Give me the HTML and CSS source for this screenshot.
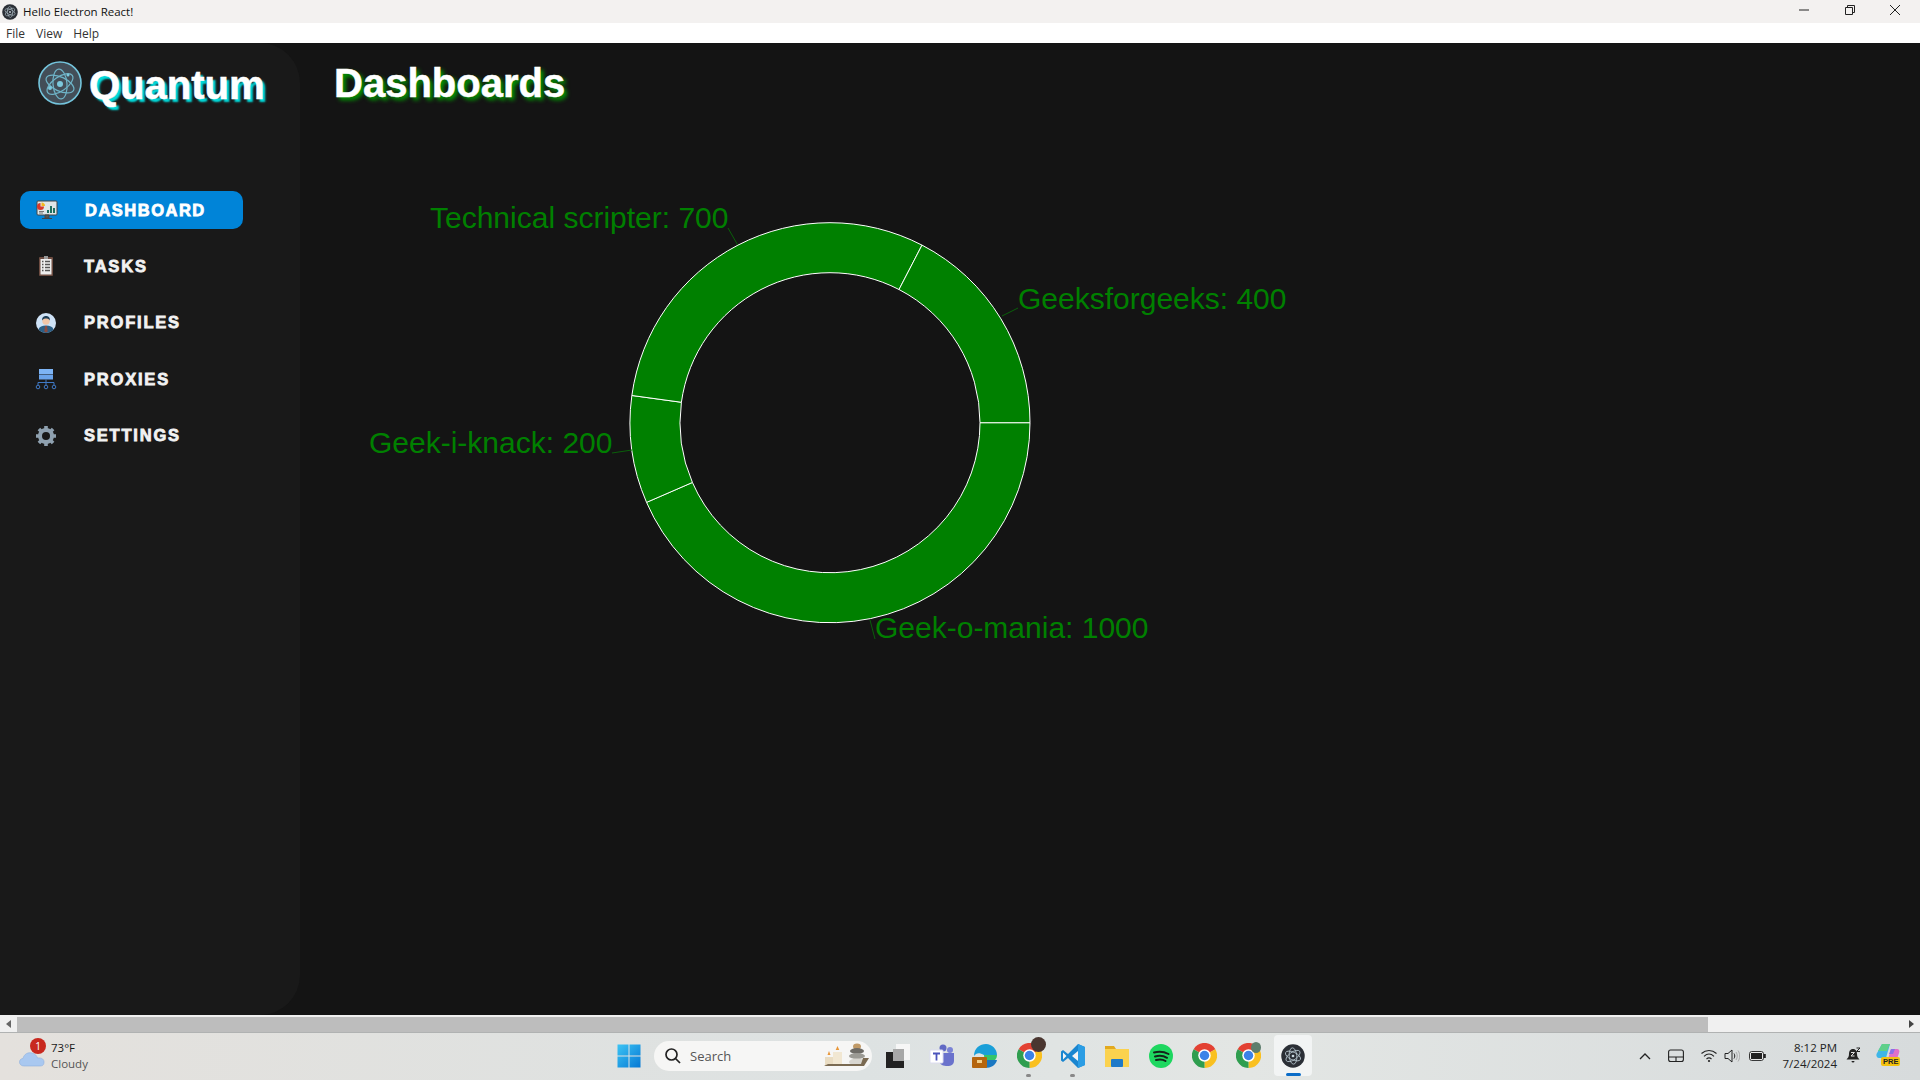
FILE: index.html
```html
<!DOCTYPE html>
<html lang="en">
<head>
    <meta charset="UTF-8">
    <title>Hello Electron React!</title>
    <link rel="stylesheet" href="styles.css">
</head>
<body>

    <svg class="defs" width="0" height="0">
        <symbol id="atom" viewBox="0 0 44 44">
            <circle cx="22" cy="22" r="21" fill="#434e58" stroke="#74c4dc" stroke-width="1.6"/>
            <g fill="none" stroke="#6fb4c8" stroke-width="1.2">
                <ellipse cx="22" cy="23" rx="15" ry="7" transform="rotate(25 22 23)"/>
                <ellipse cx="22" cy="23" rx="15" ry="7" transform="rotate(85 22 23)"/>
                <ellipse cx="22" cy="23" rx="15" ry="7" transform="rotate(145 22 23)"/>
            </g>
            <g fill="#7cc8dc">
                <circle cx="22" cy="23" r="3"/>
                <circle cx="12" cy="27" r="2"/>
                <circle cx="30" cy="14" r="1.5"/>
            </g>
        </symbol>
        <symbol id="atom-dark" viewBox="0 0 44 44">
            <circle cx="22" cy="22" r="21.500" fill="#2b2f36"/>
            <g fill="none" stroke="#b7c6cf" stroke-width="1.500">
                <ellipse cx="22" cy="22" rx="15" ry="7" transform="rotate(25 22 22)"/>
                <ellipse cx="22" cy="22" rx="15" ry="7" transform="rotate(85 22 22)"/>
                <ellipse cx="22" cy="22" rx="15" ry="7" transform="rotate(145 22 22)"/>
            </g>
            <circle cx="22" cy="22" r="2.500" fill="#c8d6de"/>
        </symbol>
        <symbol id="chrome" viewBox="2 2 20 20">
            <path d="M12 12 L3.300 7 A10 10 0 0 1 20.700 7 Z" fill="#e34133"/>
            <path d="M12 12 L20.700 7 A10 10 0 0 1 12 22 Z" fill="#f9c020"/>
            <path d="M12 12 L12 22 A10 10 0 0 1 3.300 7 Z" fill="#2f9e4f"/>
            <circle cx="12" cy="12" r="5" fill="#fff"/>
            <circle cx="12" cy="12" r="3.800" fill="#3b82e8"/>
        </symbol>
    </svg>

    <div class="title-bar">
        <svg class="title-icon" width="16" height="16"><use href="#atom-dark"/></svg>
        <span class="title-text">Hello Electron React!</span>
        <div class="window-buttons">
            <svg width="12" height="12" viewBox="0 0 12 12"><path d="M1 6h10" stroke="#222" fill="none"/></svg>
            <svg width="12" height="12" viewBox="0 0 12 12"><path d="M1.500 3.500h7v7h-7zM3.500 3V1.500h7v7H9" stroke="#222" fill="none"/></svg>
            <svg width="12" height="12" viewBox="0 0 12 12"><path d="M1 1l10 10M11 1L1 11" stroke="#222" fill="none"/></svg>
        </div>
    </div>

    <div class="menu-bar">
        <span>File</span>
        <span>View</span>
        <span>Help</span>
    </div>

    <div class="app">
        <div class="sidebar">
            <div class="logo">
                <svg width="44" height="44"><use href="#atom"/></svg>
                <span class="logo-text">Quantum</span>
            </div>
            <div class="nav">
                <div class="nav-item active">
                    <svg width="22" height="22" viewBox="0 0 22 22">
                        <rect x="1" y="2" width="20" height="14" rx="1" fill="#dfe6e8" stroke="#444"/>
                        <path d="M8 7.500 A3.500 3.500 0 1 1 4.500 4 L4.500 7.500 Z" fill="#d8392b"/>
                        <path d="M5.500 3.500 A3.500 3.500 0 0 1 9 7 L5.500 7 Z" fill="#f3b71c"/>
                        <path d="M11 14v-3h2v3zM14 14V7h2v7zM17 14v-5h2v5z" fill="#1f6f5f"/>
                        <path d="M3 12.500h5M3 14h4" stroke="#777"/>
                        <path d="M9 16h4v3H9zM6 19.500h10" fill="#555" stroke="#444"/>
                    </svg>
                    <span>DASHBOARD</span>
                </div>
                <div class="nav-item">
                    <svg width="22" height="22" viewBox="0 0 22 22">
                        <rect x="4" y="2" width="14" height="19" rx="1" fill="#6d4c41"/>
                        <rect x="5.500" y="4" width="11" height="15.500" fill="#eee"/>
                        <rect x="9" y="1" width="4" height="3" fill="#999"/>
                        <path d="M7 6.500h1.500M10 6.500h5M7 9.500h1.500M10 9.500h5M7 12.500h1.500M10 12.500h5M7 15.500h1.500M10 15.500h5" stroke="#555" stroke-width="1.300"/>
                    </svg>
                    <span>TASKS</span>
                </div>
                <div class="nav-item">
                    <svg width="22" height="22" viewBox="0 0 22 22">
                        <circle cx="11" cy="11" r="10" fill="#cfe3f7"/>
                        <path d="M3.500 17.500C4.500 14.500 7 13.500 11 13.500s6.500 1 7.500 4A10 10 0 0 1 3.500 17.500Z" fill="#2c5f86"/>
                        <path d="M10 14h2l.7 5.500-1.700 1-1.700-1z" fill="#8d4a3e"/>
                        <circle cx="11" cy="9" r="3.700" fill="#f2c6a8"/>
                        <path d="M7 8.500C7 5 9 4 11 4s4 1 4 4.500c-1-1.500-2.500-2-4-2s-3 .5-4 2Z" fill="#1f3f57"/>
                    </svg>
                    <span>PROFILES</span>
                </div>
                <div class="nav-item">
                    <svg width="22" height="22" viewBox="0 0 22 22">
                        <rect x="4" y="1" width="14" height="5" fill="#7db4f5"/>
                        <rect x="4" y="6.500" width="14" height="5" fill="#6aa3ea"/>
                        <path d="M11 11.500v6M3 17v-2.500h16V17" fill="none" stroke="#3f78c4"/>
                        <g fill="none" stroke="#3f78c4">
                            <circle cx="3" cy="19" r="1.800"/>
                            <circle cx="11" cy="19" r="1.800"/>
                            <circle cx="19" cy="19" r="1.800"/>
                        </g>
                    </svg>
                    <span>PROXIES</span>
                </div>
                <div class="nav-item">
                    <svg width="22" height="22" viewBox="0 0 22 22">
                        <circle cx="11" cy="11" r="6" fill="none" stroke="#8fa1b0" stroke-width="4"/>
                        <path d="M11 1v20M1 11h20M3.900 3.900l14.200 14.200M18.100 3.900L3.900 18.100" stroke="#8fa1b0" stroke-width="3.600"/>
                        <circle cx="11" cy="11" r="4" fill="#191919"/>
                    </svg>
                    <span>SETTINGS</span>
                </div>
            </div>
        </div>

        <div class="main">
            <h1 class="page-title">Dashboards</h1>
            <svg class="chart" width="1000" height="520" viewBox="0 0 1000 520">
                <g transform="translate(496 272.700)" fill="#008000" stroke="#fff">
                    <path d="M200 0A200 200 0 0 1-183.450 79.680L-137.590 59.760A150 150 0 0 0 150 0Z"/>
                    <path d="M-183.450 79.680A200 200 0 0 1-198.140-27.230L-148.600-20.430A150 150 0 0 0-137.590 59.760Z"/>
                    <path d="M-198.140-27.230A200 200 0 0 1 92.010-177.580L69.010-133.180A150 150 0 0 0-148.600-20.430Z"/>
                    <path d="M92.010-177.580A200 200 0 0 1 200 0L150 0A150 150 0 0 0 69.010-133.180Z"/>
                </g>
                <g class="label-lines">
                    <path d="M394 78L403.700 95"/>
                    <path d="M668 166L684 158"/>
                    <path d="M278 303L298 300"/>
                    <path d="M536 470L541 489"/>
                </g>
                <g class="labels">
                    <text x="96" y="78">Technical scripter: 700</text>
                    <text x="684" y="159">Geeksforgeeks: 400</text>
                    <text x="35" y="303">Geek-i-knack: 200</text>
                    <text x="541" y="488">Geek-o-mania: 1000</text>
                </g>
            </svg>
        </div>
    </div>

    <div class="scroll-bar">
        <div class="scroll-arrow scroll-left"></div>
        <div class="scroll-thumb"></div>
        <div class="scroll-arrow scroll-right"></div>
    </div>

    <div class="taskbar">
        <div class="weather">
            <div class="weather-icon">
                <svg width="26" height="20" viewBox="0 0 26 20">
                    <path d="M5 18C2 18 .5 16 .5 14S2 10.500 4 10.500C5 6 9 4 13 5c3 .5 5 3 5.500 5 3-.5 6.500.5 6.500 4s-2 4-4 4Z" fill="#a9c8f0" stroke="#8eb0de" stroke-width=".6"/>
                </svg>
                <span class="weather-badge">1</span>
            </div>
            <div class="weather-text">
                <div>73°F</div>
                <div class="weather-sub">Cloudy</div>
            </div>
        </div>

        <div class="task-center">
            <svg class="start-icon" width="24" height="24" viewBox="0 0 24 24">
                <defs>
                    <linearGradient id="startFill" x1="0" y1="0" x2="1" y2="1">
                        <stop offset="0" stop-color="#3cc4f4"/>
                        <stop offset="1" stop-color="#0678d4"/>
                    </linearGradient>
                </defs>
                <path d="M.5 .5h11v11H.5zM12.500 .5h11v11h-11zM.5 12.500h11v11H.5zM12.500 12.500h11v11h-11z" fill="url(#startFill)"/>
            </svg>
            <div class="search-box">
                <svg width="18" height="18" viewBox="0 0 18 18"><circle cx="7.500" cy="7.500" r="5.500" fill="none" stroke="#222" stroke-width="1.700"/><path d="M11.500 11.500L16 16" stroke="#222" stroke-width="1.700"/></svg>
                <span class="search-text">Search</span>
                <svg class="search-art" width="46" height="26" viewBox="0 0 46 26">
                    <rect x="1" y="14" width="9" height="9" fill="#e9dcc2"/>
                    <rect x="9" y="9" width="9" height="14" fill="#f1e7d2"/>
                    <path d="M13.500 3l1.800 4h-3.600zM5 8l1.500 4h-3z" fill="#e8973a"/>
                    <ellipse cx="33" cy="3.500" rx="4" ry="3" fill="#c09a68"/>
                    <ellipse cx="33" cy="8" rx="7" ry="3" fill="#6d6b66"/>
                    <ellipse cx="33" cy="13" rx="8" ry="3" fill="#9b9a94"/>
                    <ellipse cx="33" cy="19" rx="8" ry="3.500" fill="#d8d6d0"/>
                    <path d="M0 23h40l5-8h-6l-2 6H4z" fill="#7a6a52"/>
                </svg>
            </div>
            <div class="task-icon">
                <svg width="24" height="24" viewBox="0 0 24 24">
                    <rect x="10" y="0" width="14" height="16" fill="#f6f6f6"/>
                    <rect x="7" y="5" width="11" height="12" fill="#a8a8a8"/>
                    <rect x="0" y="8" width="18" height="16" fill="#222"/>
                    <rect x="7" y="8" width="11" height="9" fill="#a8a8a8"/>
                </svg>
            </div>
            <div class="task-icon">
                <svg width="26" height="26" viewBox="0 0 26 26">
                    <circle cx="21" cy="7" r="3" fill="#7b83d6"/>
                    <circle cx="14" cy="5" r="3.500" fill="#6169c4"/>
                    <path d="M10 10h15v8a5 5 0 0 1-5 5h-3c-4 0-7-3-7-6Z" fill="#6a72cc"/>
                    <rect x="1" y="7" width="13" height="13" rx="1" fill="#fff" stroke="#dcdcf0"/>
                    <path d="M4 10.500h7M7.500 10.500v7" stroke="#4b53bc" stroke-width="1.800"/>
                </svg>
            </div>
            <div class="task-icon">
                <svg width="26" height="26" viewBox="0 0 26 26">
                    <path d="M2 13C2 5 8 1 14 1c6 0 11 5 11 11H12c-5-3-8-2-10 1Z" fill="#1a9fd8"/>
                    <path d="M25 12c0 2-1 4-2 5h-7c-3 0-4-2-4-5Z" fill="#35c56a"/>
                    <path d="M25 17c-1 5-6 8-12 8v-8Z" fill="#1a78c2"/>
                    <rect x="0" y="14" width="15" height="11" rx="1" fill="#b5650f"/>
                    <rect x="5" y="17" width="5" height="3" fill="#f2cf8a"/>
                </svg>
            </div>
            <div class="task-icon task-open">
                <svg width="25" height="25"><use href="#chrome"/></svg>
                <span class="avatar"></span>
            </div>
            <div class="task-icon task-open">
                <svg width="26" height="26" viewBox="0 0 26 26">
                    <path d="M18 1L8 11 3 7 1 8.500v9L3 19l5-4 10 10 7-3V4Z" fill="#1a86d0"/>
                    <path d="M3 9.500l3.500 3.500L3 16.500Z" fill="#f4f4f4"/>
                    <path d="M18 1l7 3v18l-7 3Z" fill="#2b9de4"/>
                    <path d="M18 8l-6 5 6 5Z" fill="#f4f4f4"/>
                </svg>
            </div>
            <div class="task-icon">
                <svg width="26" height="26" viewBox="0 0 26 26">
                    <path d="M1 3h9l2 3h13v18H1Z" fill="#e2a91e"/>
                    <rect x="1" y="6" width="24" height="18" fill="#fbd24e"/>
                    <rect x="7" y="16" width="12" height="8" rx="1" fill="#1f7ac8"/>
                </svg>
            </div>
            <div class="task-icon">
                <svg width="26" height="26" viewBox="0 0 26 26">
                    <circle cx="13" cy="13" r="12" fill="#1ed760"/>
                    <path d="M6 9.500c5-1.500 10-1 14.500 1.500M7 13.500c4-1 8.500-.8 12 1.300M8 17c3-.8 7-.6 9.500 1" fill="none" stroke="#15211a" stroke-width="2" stroke-linecap="round"/>
                </svg>
            </div>
            <div class="task-icon">
                <svg width="25" height="25"><use href="#chrome"/></svg>
            </div>
            <div class="task-icon">
                <svg width="25" height="25"><use href="#chrome"/></svg>
                <span class="avatar avatar-small"></span>
            </div>
            <div class="task-icon task-active">
                <svg width="24" height="24"><use href="#atom-dark"/></svg>
            </div>
        </div>

        <div class="tray">
            <svg class="tray-chevron" width="12" height="8" viewBox="0 0 12 8"><path d="M1 7l5-5 5 5" fill="none" stroke="#222" stroke-width="1.300"/></svg>
            <svg class="tray-pad" width="16" height="14" viewBox="0 0 16 14"><rect x=".6" y="1" width="14.800" height="11.500" rx="2" fill="none" stroke="#222" stroke-width="1.100"/><path d="M.6 8h14.800M8 8v4.500" stroke="#222" stroke-width="1.100"/></svg>
            <svg class="tray-wifi" width="16" height="14" viewBox="0 0 16 14"><path d="M.5 4.500c4.500-4 10.500-4 15 0M3 7.300c3-2.700 7-2.700 10 0M5.500 10c1.500-1.300 3.500-1.300 5 0" fill="none" stroke="#222" stroke-width="1.100"/><circle cx="8" cy="12" r="1.100" fill="#222"/></svg>
            <svg class="tray-sound" width="16" height="14" viewBox="0 0 16 14"><path d="M1 4.500h3L8 1v12L4 9.500H1Z" fill="none" stroke="#222"/><path d="M10 4.500c1 1.500 1 3.500 0 5" fill="none" stroke="#222"/><path d="M12 3c1.700 2.500 1.700 5.500 0 8M14 1.500c2.300 3.500 2.300 7.500 0 11" fill="none" stroke="#aaa"/></svg>
            <svg class="tray-battery" width="17" height="10" viewBox="0 0 17 10"><rect x=".6" y=".6" width="13.800" height="8.800" rx="2" fill="#fff" stroke="#222"/><rect x="2" y="2" width="11" height="6" fill="#222"/><rect x="15" y="3" width="1.800" height="4" fill="#222"/></svg>
            <div class="clock">
                <div>8:12 PM</div>
                <div>7/24/2024</div>
            </div>
            <svg class="tray-bell" width="15" height="17" viewBox="0 0 15 17"><path d="M7 2C4 2 3 4.500 3 7c0 2.500-1 4-2.500 5.500h13C12 11 11 9.500 11 7c0-2.500-1-5-4-5Z" fill="#222"/><path d="M5.500 14h3a1.500 1.500 0 0 1-3 0Z" fill="#222"/><path d="M5 5.500h3.500L5 9h3.500" fill="none" stroke="#ddd"/><path d="M10.500 1h3.500l-3.500 3.500H14" fill="none" stroke="#222"/></svg>
            <div class="copilot">
                <svg width="24" height="20" viewBox="0 0 24 20">
                    <path d="M6 1h8l-4 14H3C1 15 0 13 .5 11Z" fill="#3fb6e8"/>
                    <path d="M6 1h8L11 8H2Z" fill="#5fd08a"/>
                    <path d="M15 6h6c2 0 3 2 2 4l-2 6h-9Z" fill="#e070c8"/>
                    <path d="M15 6h4l-2 5h-4Z" fill="#8a70e8"/>
                </svg>
                <span class="copilot-badge">PRE</span>
            </div>
        </div>
    </div>

</body>
</html>
```

FILE: styles.css
```css
body {
    display: flex;
    flex-direction: column;
    height: 100vh;
    margin: 0;
    overflow: hidden;
    background-color: #141414;
    font-family: "Open Sans", "Noto Sans", sans-serif;
}
.defs {
    position: absolute;
}
.title-bar {
    display: flex;
    align-items: center;
    height: 23px;
    padding-left: 2px;
    background-color: #f3f1f0;
    color: #111;
    font-size: 11.500px;
}
.title-text {
    margin-left: 5px;
    flex: 1;
}
.window-buttons {
    display: flex;
    gap: 33.500px;
    padding-right: 19px;
    margin-top: -3px;
}
.menu-bar {
    display: flex;
    gap: 11px;
    align-items: center;
    height: 20px;
    padding-left: 6px;
    background-color: #fff;
    color: #333;
    font-size: 12px;
}
.app {
    display: flex;
    flex: 1;
    min-height: 0;
}
.sidebar {
    width: 300px;
    background-color: #191919;
    border-radius: 0 40px 40px 0;
}
.logo {
    display: flex;
    align-items: flex-start;
    gap: 7px;
    padding: 18px 0 0 38px;
}
.logo-text {
    margin-top: 2px;
    color: #fff;
    font-family: "Liberation Sans", Arial, sans-serif;
    font-size: 40px;
    font-weight: bold;
    -webkit-text-stroke: 0.5px #fff;
    text-shadow: 3px 3px 2px #00dede;
}
.nav {
    display: flex;
    flex-direction: column;
    gap: 18.400px;
    margin-top: 83px;
    padding-left: 20px;
}
.nav-item {
    display: flex;
    align-items: center;
    gap: 27px;
    width: 223px;
    height: 38px;
    padding-left: 15px;
    box-sizing: border-box;
    border-radius: 10px;
    color: #f2f2f2;
    font-family: "Liberation Sans", Arial, sans-serif;
    font-size: 16.500px;
    font-weight: bold;
    letter-spacing: 1.800px;
    -webkit-text-stroke: 0.8px #f2f2f2;
}
.nav-item.active {
    padding-left: 16px;
    background-color: #0084d8;
    color: #fff;
    letter-spacing: 1.500px;
    -webkit-text-stroke: 0.8px #fff;
}
.main {
    flex: 1;
    padding-left: 34px;
}
.page-title {
    margin: 14px 0 0 0;
    color: #fff;
    font-family: "Liberation Sans", Arial, sans-serif;
    font-size: 40px;
    font-weight: bold;
    line-height: 52px;
    -webkit-text-stroke: 0.5px #fff;
    text-shadow: 3px 3px 4px #00a000;
}
.chart {
    display: block;
    margin-top: 41px;
}
.labels {
    fill: #008000;
    font-family: "Liberation Sans", Arial, sans-serif;
    font-size: 30px;
}
.label-lines {
    fill: none;
    stroke: #0a5f0a;
}
.scroll-bar {
    display: flex;
    align-items: stretch;
    height: 15px;
    padding-top: 2px;
    background-color: #f0f0f0;
}
.scroll-thumb {
    width: 1691px;
    background-color: #bdbdbd;
}
.scroll-arrow {
    width: 0;
    height: 0;
    margin-top: 3px;
    border-top: 4px solid transparent;
    border-bottom: 4px solid transparent;
}
.scroll-left {
    margin-left: 6px;
    margin-right: 6px;
    border-right: 5px solid #666;
}
.scroll-right {
    margin-left: auto;
    margin-right: 6px;
    border-left: 5px solid #444;
}
.taskbar {
    display: flex;
    align-items: center;
    height: 48px;
    padding-bottom: 2px;
    box-sizing: border-box;
    border-top: 1px solid #b0b2b2;
    background: linear-gradient(90deg, #e4e1dd 0%, #dde2e2 45%, #e3e6e4 65%, #d7dbdc 100%);
    color: #1a1a1a;
    font-size: 11.500px;
}
.weather {
    display: flex;
    align-items: center;
    gap: 6px;
    width: 610px;
    padding-left: 19px;
    box-sizing: border-box;
    line-height: 16px;
}
.weather-icon {
    position: relative;
    display: flex;
    margin-top: 4px;
}
.weather-badge {
    position: absolute;
    top: -10px;
    right: -1px;
    width: 16px;
    height: 16px;
    border-radius: 50%;
    background-color: #c8281e;
    color: #fff;
    font-size: 10px;
    line-height: 16px;
    text-align: center;
}
.weather-sub {
    color: #555;
}
.task-center {
    display: flex;
    align-items: center;
    width: 702px;
    flex: none;
}
.start-icon {
    margin-left: 7px;
    flex: none;
}
.search-box {
    display: flex;
    align-items: center;
    width: 218px;
    height: 30px;
    margin-left: 13px;
    margin-right: 4px;
    padding-left: 10px;
    box-sizing: border-box;
    border-radius: 15px;
    background-color: #f6f6f5;
    color: #555;
    font-size: 13px;
}
.search-text {
    margin-left: 8px;
    flex: 1;
}
.search-art {
    margin-right: 2px;
}
.task-icon {
    position: relative;
    display: flex;
    align-items: center;
    justify-content: center;
    width: 43.800px;
    height: 38px;
    flex: none;
}
.task-open::after {
    content: "";
    position: absolute;
    bottom: -2px;
    left: 19px;
    width: 5px;
    height: 3px;
    border-radius: 2px;
    background-color: #888;
}
.task-active {
    width: 38px;
    height: 41px;
    margin-left: 4px;
    border-radius: 4px;
    background-color: #f2f4f4;
}
.task-active::after {
    content: "";
    position: absolute;
    bottom: 0;
    left: 12px;
    width: 15px;
    height: 3px;
    border-radius: 2px;
    background-color: #0a6cc8;
}
.avatar {
    position: absolute;
    top: 0;
    right: 5px;
    width: 15px;
    height: 15px;
    border-radius: 50%;
    background-color: #4a3630;
}
.avatar-small {
    top: 5px;
    right: 9px;
    width: 10px;
    height: 11px;
    background-color: #5d7d6c;
}
.tray {
    display: flex;
    flex: 1;
    align-items: center;
}
.tray-chevron {
    margin-left: 327px;
}
.tray-pad {
    margin-left: 17px;
}
.tray-wifi {
    margin-left: 17px;
}
.tray-sound {
    margin-left: 7px;
}
.tray-battery {
    margin-left: 8.500px;
}
.clock {
    width: 62px;
    margin-left: 9.500px;
    color: #222;
    font-size: 11.500px;
    line-height: 16px;
    text-align: right;
}
.tray-bell {
    margin-left: 8.500px;
}
.copilot {
    position: relative;
    display: flex;
    margin-left: 15.500px;
    margin-top: -5px;
}
.copilot-badge {
    position: absolute;
    top: 14px;
    left: 5px;
    padding: 0 2px;
    border-radius: 2px;
    background-color: #f4c20d;
    color: #222;
    font-family: "Liberation Sans", Arial, sans-serif;
    font-size: 7.500px;
    font-weight: bold;
    line-height: 9px;
}
```
